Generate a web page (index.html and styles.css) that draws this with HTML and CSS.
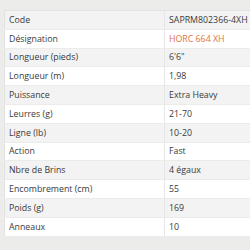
FILE: index.html
```html
<!DOCTYPE html>
<html>
<head>
<meta charset="utf-8">
<link rel="stylesheet" href="styles.css">
</head>
<body>
<table class="specs">
<tr><td class="k">Code</td><td class="v">SAPRM802366-4XH</td></tr>
<tr><td class="k">Désignation</td><td class="v hl">HORC 664 XH</td></tr>
<tr><td class="k">Longueur (pieds)</td><td class="v">6'6"</td></tr>
<tr><td class="k">Longueur (m)</td><td class="v">1,98</td></tr>
<tr><td class="k">Puissance</td><td class="v">Extra Heavy</td></tr>
<tr><td class="k">Leurres (g)</td><td class="v">21-70</td></tr>
<tr><td class="k">Ligne (lb)</td><td class="v">10-20</td></tr>
<tr><td class="k">Action</td><td class="v">Fast</td></tr>
<tr><td class="k">Nbre de Brins</td><td class="v">4 égaux</td></tr>
<tr><td class="k">Encombrement (cm)</td><td class="v">55</td></tr>
<tr><td class="k">Poids (g)</td><td class="v">169</td></tr>
<tr><td class="k">Anneaux</td><td class="v">10</td></tr>
</table>
</body>
</html>
```
FILE: styles.css
```css
html, body {
  margin: 0;
  padding: 0;
  background: #ececea;
  overflow: hidden;
}
body {
  padding: 10px 0 0 4px;
  font-family: "Open Sans", sans-serif;
  font-size: 8.8px;
  color: #3a3a3a;
}
.specs {
  border-collapse: collapse;
  table-layout: fixed;
  width: 246px;
  border-top: 1px solid #e2e2e0;
  border-left: 1px solid #e2e2e0;
}
.specs tr:nth-child(odd) { background: #f3f3f3; }
.specs tr:nth-child(even) { background: #ffffff; }
.specs td {
  height: 17.8px;
  padding: 0 4px;
  border-bottom: 1px solid #ebebea;
  white-space: nowrap;
}
.k { width: 151px; border-right: 1px solid #e6e6e6; }
.v { padding-left: 5px; }
.hl { color: #e0733f; }
```
